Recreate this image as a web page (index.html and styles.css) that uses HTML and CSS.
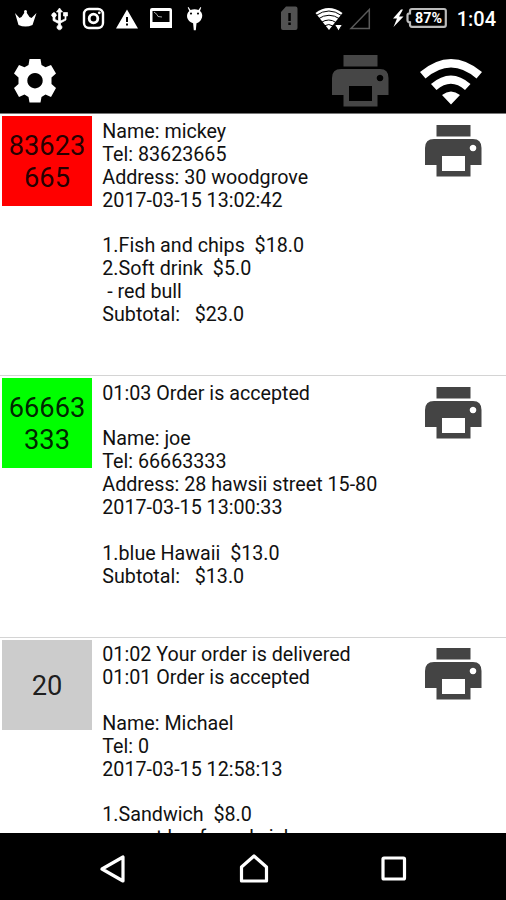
FILE: index.html
```html
<!DOCTYPE html>
<html lang="en">
<head>
<meta charset="utf-8">
<title>Orders</title>
<link rel="stylesheet" href="styles.css">
</head>
<body>
<svg class="defs" width="0" height="0">
  <symbol id="printer" viewBox="0 0 57 52">
    <path fill-rule="evenodd" d="M11.500 0H45.500V11.500H11.500ZM9 14H48Q56.500 14 56.500 23V40H45.500V51.500H11.500V40H0V23Q0 14 9 14ZM17 31V46H40V31ZM48 19.700a3.300 3.300 0 1 0 .01 0Z"/>
  </symbol>
</svg>
<div class="phone">
  <div class="status">
    <svg class="status-icons" viewBox="0 0 210 38" width="210" height="38" fill="#fff">
      <path d="M15 13l4.500 5 2-1 4-6 4 6 2 1 5-5-4 12q-7 3-14 0Z"/>
      <circle cx="25.500" cy="11.500" r="1.500"/>
      <path stroke="#fff" stroke-width=".7" d="M59.500 8l3 4h-2v9l4.500-2v-3h-1.500v-3.500h4V16H66v4l-5.500 3v2a2.500 2.500 0 1 1-2 0v-1.500L53 20.500V17a2.200 2.200 0 1 1 2 0v2.500l3.500 1.500v-9h-2Z"/>
      <g fill="none" stroke="#fff"><rect x="84" y="9" width="19" height="19" rx="5" stroke-width="2.400"/><circle cx="93.500" cy="18.500" r="4.300" stroke-width="2.800"/></g>
      <circle cx="99.300" cy="12.800" r="1.400"/>
      <path fill-rule="evenodd" d="M127 9.500L138 28.500H116ZM126 17v5h2v-5Zm0 6.500v2h2v-2Z"/>
      <path fill-rule="evenodd" d="M152 8h18q2 0 2 2v18h-22V10q0-2 2-2Zm.5 3v11h17V11Z"/>
      <path d="M154 12l3 2.500 1 2 4 .5" fill="none" stroke="#aaa"/>
      <path fill-rule="evenodd" d="M188.500 7l2 3q4-1.500 8 0l2-3 .7.500-1.200 3.500q3 2.500 2 6.500-1.500 4.500-5.500 5.700l-.7 7h-2l-.7-7q-5-1.500-6-6-.5-4 2.200-6.200L187.700 7.500ZM191 12.500a1 1 0 1 0 .01 0Zm7 0a1 1 0 1 0 .01 0Z"/>
    </svg>
    <svg class="status-icons" viewBox="275 0 176 38" width="176" height="38">
      <path fill="#525252" fill-rule="evenodd" d="M286 6.500h9.500q2 0 2 2V28q0 2-2 2h-12.500q-2 0-2-2V12ZM288.300 13v8h2.500v-8Zm0 9.500V25h2.500v-2.500Z"/>
      <path fill="#fff" d="M315.500 13q13-10 27 0L329 30Z"/>
      <g fill="none" stroke="#000" stroke-width="1"><path d="M316 15.500q13-9 25.500 0"/><path d="M318 19q11-7.500 22 0"/><path d="M321 22.500q8-5 15 0"/><path d="M324 26q5-3 9 0"/></g>
      <path fill="#fff" stroke="#000" d="M334.500 24.500h8l-4 6.500Z"/>
      <path fill="none" stroke="#5a5a5a" stroke-width="1.500" d="M351 28.500L369.300 9.500V28.500Z"/>
      <path fill="#fff" d="M401 9.500l-8 9h4l-3.500 8.500 10-10.500h-4.500l4-7Z"/>
      <path fill="#000" stroke="#bbb" stroke-width="2.200" d="M412 9h32q1.800 0 1.800 1.800V25q0 1.800-1.800 1.800H412q-2 0-2-2v-2.500q-2.500 0-2.500-2v-5q0-2 2.500-2V11q0-2 2-2Z"/>
      <text class="battery" x="428.500" y="23.200" text-anchor="middle" textLength="27" lengthAdjust="spacingAndGlyphs">87%</text>
    </svg>
    <span class="clock">1:04</span>
  </div>
  <header class="toolbar">
    <svg class="gear" viewBox="0 0 42 44" width="42" height="44"><path fill="#fff" fill-rule="evenodd" d="M15.500 0H26.500L27.500 6L31.500 8.200L37 6L42 14.500L37.500 18.500V25L42 29L37 38L31.500 35.500L27.500 38L26.500 43.500H15.500L14.500 38L10.500 35.500L5 38L0 29L4.500 25V18.500L0 14.500L5 6L10.500 8.200L14.500 6ZM21 14a7.700 7.700 0 1 0 .01 0Z"/></svg>
    <svg class="printer dim" width="57" height="52"><use href="#printer"/></svg>
    <svg class="wifi" viewBox="0 0 62 46" width="62" height="46"><path fill="#fff" d="M0 13Q31-13 62 13L56.500 19.500Q31-2.500 5.500 19.500ZM11 25Q31 8 50.500 25L45 31Q31 18.500 16.500 31ZM22 36Q31 29 40 36L31 45.500Z"/></svg>
  </header>
  <main class="orders">
    <section class="order">
      <div class="badge red">83623<br>665</div>
      <div class="details">Name: mickey
Tel: 83623665
Address: 30 woodgrove
2017-03-15 13:02:42

1.Fish and chips  $18.0
2.Soft drink  $5.0
 - red bull
Subtotal:   $23.0</div>
      <svg class="printer" width="57" height="52"><use href="#printer"/></svg>
    </section>
    <section class="order">
      <div class="badge green">66663<br>333</div>
      <div class="details">01:03 Order is accepted

Name: joe
Tel: 66663333
Address: 28 hawsii street 15-80
2017-03-15 13:00:33

1.blue Hawaii  $13.0
Subtotal:   $13.0</div>
      <svg class="printer" width="57" height="52"><use href="#printer"/></svg>
    </section>
    <section class="order">
      <div class="badge gray">20</div>
      <div class="details">01:02 Your order is delivered
01:01 Order is accepted

Name: Michael
Tel: 0
2017-03-15 12:58:13

1.Sandwich  $8.0
 - roast beef sandwich</div>
      <svg class="printer" width="57" height="52"><use href="#printer"/></svg>
    </section>
  </main>
  <nav class="navbar">
    <svg viewBox="0 0 26 28" width="26" height="28"><path d="M2 14L23 2V26Z"/></svg>
    <svg viewBox="0 0 30 30" width="30" height="30"><path d="M2.500 13L15 2L27.500 13V27H2.500Z"/></svg>
    <svg viewBox="0 0 26 26" width="26" height="26"><rect x="2" y="2" width="21.500" height="21" rx="1"/></svg>
  </nav>
</div>
</body>
</html>
```

FILE: styles.css
```css
* { box-sizing: border-box; }
body { margin: 0; background: #fff; font-family: Roboto, "Liberation Sans", sans-serif; }
.defs { display: block; }
.phone { width: 506px; height: 900px; display: flex; flex-direction: column; overflow: hidden; }
.status { height: 38px; flex: none; display: flex; align-items: center; background: #000; color: #fff; padding-right: 10px; }
.status-icons { display: block; flex: none; }
.status-icons + .status-icons { margin-left: 65px; }
.clock { margin-left: auto; font-size: 20px; font-weight: 500; line-height: 38px; }
.battery { font-size: 15px; font-weight: 700; fill: #fff; }
.toolbar { height: 76px; flex: none; display: flex; align-items: flex-start; background: #000; border-bottom: 1px solid #777; padding: 17px 24px 0 14px; }
.gear { margin-top: 4px; }
.printer { flex: none; fill: #444; }
.dim { margin-left: auto; fill: #464646; }
.wifi { margin: 4px 0 0 31px; }
.orders { flex: 1; min-height: 0; overflow: hidden; padding-top: .4px; }
.order { height: 261.700px; display: flex; align-items: flex-start; border-bottom: 1px solid #d4d4d4; padding: 2px 24px 0 2px; }
.badge { width: 90px; height: 90px; flex: none; display: flex; align-items: center; justify-content: center; text-align: center; font-size: 27.300px; line-height: 32px; color: rgba(0, 0, 0, .87); padding-top: 2px; }
.red { background: #f00; }
.green { background: #0f0; }
.gray { background: #ccc; }
.details { flex: 1; margin: 4.500px 0 0 10.300px; white-space: pre; font-size: 19.700px; line-height: 22.880px; color: #111; }
.order .printer { margin-top: 8.500px; }
.navbar { height: 67px; flex: none; background: #000; display: flex; align-items: center; justify-content: space-between; padding: 4px 99px 0 100px; }
.navbar svg { fill: none; stroke: #fff; stroke-width: 3.200; stroke-linejoin: round; }
```
